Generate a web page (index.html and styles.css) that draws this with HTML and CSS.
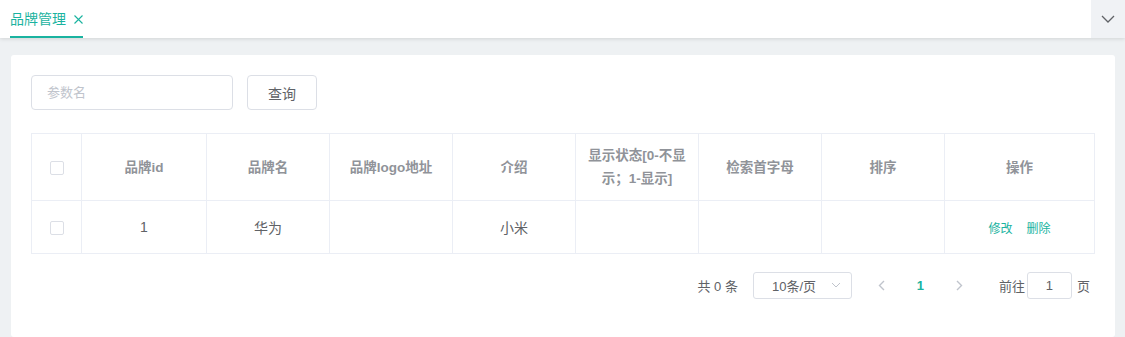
FILE: index.html
```html
<!DOCTYPE html>
<html lang="zh">
<head>
    <meta charset="UTF-8">
    <title>品牌管理</title>
    <link rel="stylesheet" href="styles.css">
</head>
<body>
    <div class="tabs-bar">
        <div class="tabs">
            <div class="tab active">品牌管理<svg class="tab-close" width="9" height="9" viewBox="0 0 9 9"><path d="M0.5 0.5 L8.5 8.5 M8.5 0.5 L0.5 8.5" fill="none" stroke="#1ab3a0" stroke-width="1.1"/></svg></div>
        </div>
        <div class="tabs-more">
            <svg width="14" height="8" viewBox="0 0 14 8"><path d="M1 1 L7 7 L13 1" fill="none" stroke="#606266" stroke-width="1.3"/></svg>
        </div>
    </div>

    <div class="card">
        <div class="search-form">
            <input type="text" class="search-input" placeholder="参数名">
            <button class="btn">查询</button>
        </div>

        <table class="data-table">
            <colgroup>
                <col style="width:50px">
                <col style="width:125px">
                <col style="width:123px">
                <col style="width:123px">
                <col style="width:123px">
                <col style="width:123px">
                <col style="width:123px">
                <col style="width:123px">
                <col>
            </colgroup>
            <thead>
                <tr>
                    <th><span class="checkbox"></span></th>
                    <th>品牌id</th>
                    <th>品牌名</th>
                    <th>品牌logo地址</th>
                    <th>介绍</th>
                    <th>显示状态[0-不显示；1-显示]</th>
                    <th>检索首字母</th>
                    <th>排序</th>
                    <th>操作</th>
                </tr>
            </thead>
            <tbody>
                <tr>
                    <td><span class="checkbox"></span></td>
                    <td>1</td>
                    <td>华为</td>
                    <td></td>
                    <td>小米</td>
                    <td></td>
                    <td></td>
                    <td></td>
                    <td><a class="link">修改</a><a class="link">删除</a></td>
                </tr>
            </tbody>
        </table>

        <div class="pagination">
            <span class="total">共 0 条</span>
            <div class="sizes">
                <span>10条/页</span>
                <svg width="10" height="6" viewBox="0 0 10 6"><path d="M1 1 L5 5 L9 1" fill="none" stroke="#c0c4cc" stroke-width="1"/></svg>
            </div>
            <span class="pager-btn">
                <svg width="7" height="11" viewBox="0 0 7 11"><path d="M6 1 L1.5 5.5 L6 10" fill="none" stroke="#c0c4cc" stroke-width="1.4"/></svg>
            </span>
            <span class="pager-num">1</span>
            <span class="pager-btn">
                <svg width="7" height="11" viewBox="0 0 7 11"><path d="M1 1 L5.5 5.5 L1 10" fill="none" stroke="#c0c4cc" stroke-width="1.4"/></svg>
            </span>
            <span class="jump">前往</span>
            <input type="text" class="jump-input" value="1">
            <span class="jump-unit">页</span>
        </div>
    </div>
</body>
</html>
```

FILE: styles.css
```css
body {
    margin: 0;
    background-color: #eef1f3;
    font-family: "Liberation Sans", "Noto Sans CJK SC", sans-serif;
    color: #606266;
    height: 337px;
    overflow: hidden;
}
.tabs-bar {
    display: flex;
    height: 38px;
    background: white;
    box-shadow: 0 1px 4px rgba(0, 0, 0, 0.12);
    position: relative;
}
.tabs {
    flex: 1;
    padding-left: 10px;
}
.tab {
    display: inline-block;
    height: 36px;
    line-height: 38px;
    font-size: 14px;
    color: #1ab3a0;
    border-bottom: 2px solid #1ab3a0;
}
.tab-close {
    margin-left: 8px;
    vertical-align: 0;
}
.tabs-more {
    width: 34px;
    background: #f0f2f5;
    display: flex;
    justify-content: center;
    align-items: center;
}
.card {
    background: white;
    margin: 17px 10px 0 11px;
    padding: 20px;
    height: 282px;
    box-sizing: border-box;
    border-radius: 3px;
}
.search-form {
    display: flex;
    gap: 14px;
    margin-bottom: 23px;
}
.search-input {
    width: 202px;
    height: 35px;
    box-sizing: border-box;
    border: 1px solid #dcdfe6;
    border-radius: 4px;
    padding: 0 15px;
    font-size: 13px;
    font-family: inherit;
    outline: none;
}
.search-input::placeholder {
    color: #c0c4cc;
}
.btn {
    width: 70px;
    height: 35px;
    background: white;
    border: 1px solid #dcdfe6;
    border-radius: 4px;
    font-size: 14px;
    font-family: inherit;
    color: #606266;
}
.data-table {
    width: 1064px;
    border-collapse: collapse;
    table-layout: fixed;
    font-size: 14px;
}
.data-table th, .data-table td {
    border: 1px solid #ebeef5;
    text-align: center;
    padding: 0 10px;
}
.data-table th {
    height: 66px;
    color: #909399;
    font-weight: bold;
    font-size: 13.5px;
    line-height: 23px;
}
.data-table td {
    height: 52px;
}
.checkbox {
    display: inline-block;
    width: 12px;
    height: 12px;
    border: 1px solid #dcdfe6;
    border-radius: 2px;
    vertical-align: middle;
}
.link {
    color: #1ab3a0;
    font-size: 12px;
    margin: 0 7px;
}
.pagination {
    display: flex;
    justify-content: flex-end;
    align-items: center;
    margin-top: 17px;
    padding-right: 5px;
    font-size: 13px;
    height: 28px;
}
.total {
    margin-right: 15px;
}
.sizes {
    width: 99px;
    height: 27px;
    box-sizing: border-box;
    border: 1px solid #dcdfe6;
    border-radius: 3px;
    display: flex;
    align-items: center;
    justify-content: space-between;
    padding: 0 10px 0 18px;
    margin-right: 10px;
}
.pager-btn, .pager-num {
    width: 39px;
    height: 28px;
    display: flex;
    align-items: center;
    justify-content: center;
}
.pager-num {
    color: #1ab3a0;
    font-weight: bold;
}
.jump {
    margin-left: 20px;
    margin-right: 2px;
}
.jump-input {
    width: 45px;
    height: 27px;
    box-sizing: border-box;
    border: 1px solid #dcdfe6;
    border-radius: 3px;
    text-align: center;
    font-family: inherit;
    font-size: 13px;
    color: #606266;
}
.jump-unit {
    margin-left: 5px;
}
```
